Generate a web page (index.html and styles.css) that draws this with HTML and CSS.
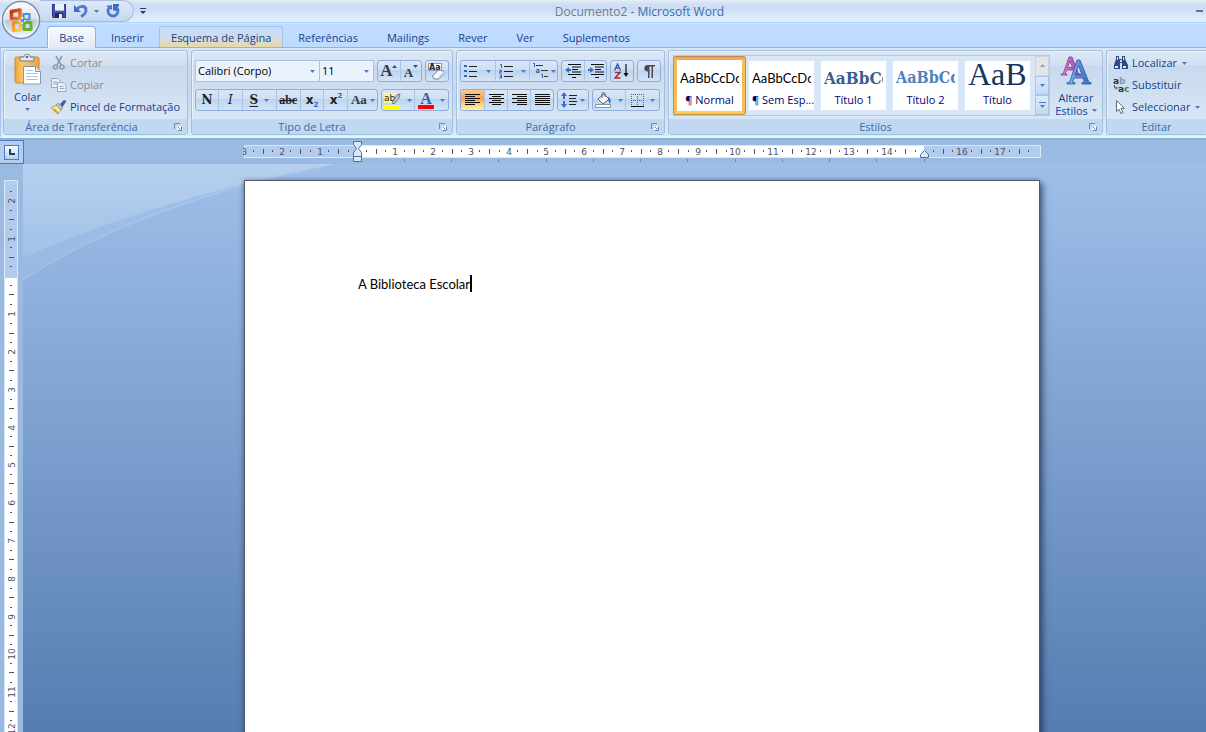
FILE: index.html
```html
<!DOCTYPE html>
<html lang="pt">
<head>
<meta charset="utf-8">
<title>Documento2 - Microsoft Word</title>
<link rel="stylesheet" href="styles.css">
</head>
<body>
<svg class="defs" width="0" height="0" aria-hidden="true">
  <defs>
    <linearGradient id="gGlass" x1="0" y1="0" x2="0" y2="1"><stop offset="0" stop-color="#fdfdfe"/><stop offset=".48" stop-color="#dde2ea"/><stop offset=".5" stop-color="#bcc6d6"/><stop offset="1" stop-color="#f6fafd"/></linearGradient>
    <linearGradient id="gRed" x1="0" y1="0" x2="1" y2="1"><stop offset="0" stop-color="#c42a10"/><stop offset="1" stop-color="#f4862c"/></linearGradient>
    <linearGradient id="gYellow" x1="0" y1="0" x2="1" y2="1"><stop offset="0" stop-color="#f08a1c"/><stop offset="1" stop-color="#ffd640"/></linearGradient>
    <linearGradient id="gBoard" x1="0" y1="0" x2="1" y2="0"><stop offset="0" stop-color="#e9a63c"/><stop offset=".3" stop-color="#fbc866"/><stop offset="1" stop-color="#e9a642"/></linearGradient>
    <linearGradient id="gPink" x1="0" y1="0" x2="1" y2="0"><stop offset="0" stop-color="#e58ad6"/><stop offset="1" stop-color="#a43aa8"/></linearGradient>
    <linearGradient id="gBlue" x1="0" y1="0" x2="1" y2="0"><stop offset="0" stop-color="#8db9f0"/><stop offset="1" stop-color="#2f68c0"/></linearGradient>
    <linearGradient id="gSky" x1="0" y1="0" x2="0" y2="1"><stop offset="0" stop-color="#c4d8f2" stop-opacity=".65"/><stop offset="1" stop-color="#b4d2f0" stop-opacity=".45"/></linearGradient>
    <symbol id="arrow" viewBox="0 0 5 3"><path d="M0 0h5L2.5 3z" fill="#4f7cb8"/></symbol>
    <symbol id="launcher" viewBox="0 0 8 8"><path d="M.5 6V.5H6" fill="none" stroke="#6b8bb5"/><path d="M3 3h5v5H3z" fill="#fff"/><path d="M3.500 3.500l3 3M7.500 3.500v4h-4" fill="none" stroke="#5f82b0"/></symbol>
    <pattern id="ticksH" x="0" y="0" width="189" height="12" patternUnits="userSpaceOnUse">
      <path fill="#4c5566" d="M9 5h1v2h-1zM19 4h1v5h-1zM28 5h1v2h-1zM47 5h1v2h-1zM57 4h1v5h-1zM66 5h1v2h-1zM85 5h1v2h-1zM95 4h1v5h-1zM104 5h1v2h-1zM122 5h1v2h-1zM132 4h1v5h-1zM142 5h1v2h-1zM160 5h1v2h-1zM170 4h1v5h-1zM180 5h1v2h-1z"/>
    </pattern>
    <pattern id="ticksV" x="0" y="0" width="12" height="189" patternUnits="userSpaceOnUse">
      <path fill="#4c5566" d="M6 9v1h2v-1zM5 18v1h5v-1zM6 28v1h2v-1zM6 47v1h2v-1zM5 57v1h5v-1zM6 66v1h2v-1zM6 85v1h2v-1zM5 94v1h5v-1zM6 104v1h2v-1zM6 123v1h2v-1zM5 132v1h5v-1zM6 142v1h2v-1zM6 160v1h2v-1zM5 170v1h5v-1zM6 179v1h2v-1z"/>
    </pattern>
    <pattern id="tabStops" x="0" y="0" width="189" height="4" patternUnits="userSpaceOnUse">
      <path fill="#7d8591" d="M0 0h1v3h-1zM47 0h1v3h-1zM94 0h1v3h-1zM141 0h1v3h-1z"/>
    </pattern>
  </defs>
</svg>

<header class="titlebar">
  <button class="office" type="button" aria-label="Botão do Office">
    <svg width="40" height="40" viewBox="0 0 40 40">
      <circle cx="20" cy="20" r="18.500" fill="url(#gGlass)" stroke="#7c8ca8" stroke-width="1.500"/>
      <circle cx="20" cy="20" r="17" fill="none" stroke="#fff" stroke-opacity=".8"/>
      <g fill="none" stroke-linejoin="round">
        <path d="M10.500 11.500l8.500-1.500v8.500h-8.500z" stroke="url(#gRed)" stroke-width="3.600"/>
        <rect x="22.500" y="14" width="6" height="5.500" stroke="#4a8fdc" stroke-width="2.200"/>
        <path d="M12.500 22.500h7v8h-7z" stroke="url(#gYellow)" stroke-width="3.200"/>
        <path d="M23 22.500h7v7h-7z" stroke="#6bb02c" stroke-width="3"/>
      </g>
      <path d="M18 20.700h6.500M21.200 17v7" stroke="#fff" stroke-width="1.400"/>
      <path d="M19.500 20.700h3.500M21.200 19v3.500" stroke="#3f7fd0" stroke-width="1.200"/>
    </svg>
  </button>
  <div class="quick">
    <button class="flat" type="button" aria-label="Guardar">
      <svg width="16" height="16" viewBox="0 0 16 16"><path d="M1 1h14v14H2l-1-1z" fill="#4a4fb5"/><path d="M1.500 1.500h13v13h-12l-1-1z" fill="none" stroke="#2c3190"/><path d="M4 1h9v7H4z" fill="#e6f2fb"/><path d="M4 7h9v1H4z" fill="#a5bfe0"/><path d="M4 10h8v5H4z" fill="#24274e"/><path d="M8 11h3v4H8z" fill="#e9eef8"/></svg>
    </button>
    <button class="flat" type="button" aria-label="Anular">
      <svg width="14" height="14" viewBox="0 0 14 14"><path d="M3 5c4-4 9-3 9 1 0 3-2 5-5 6.500" fill="none" stroke="#4a7acb" stroke-width="2.800"/><path d="M0 1v7h7z" fill="#3b6fc4"/></svg>
      <svg class="arrow" width="5" height="3"><use href="#arrow"/></svg>
    </button>
    <button class="flat" type="button" aria-label="Repetir">
      <svg width="14" height="14" viewBox="0 0 14 14"><path d="M3.500 3.500a5 5 0 1 0 7 0" fill="none" stroke="#4a7acb" stroke-width="2.800"/><path d="M7 0h6v2L10.500 4v3.500L7 6z" fill="#3b6fc4"/><path d="M0 2l6-1v5z" fill="#4a7acb"/></svg>
    </button>
  </div>
  <button class="flat customise" type="button" aria-label="Personalizar barra de acesso rápido">
    <svg width="6" height="6" viewBox="0 0 6 6"><path d="M0 0h6v1H0zM0 3h6L3 6z" fill="#243f6b"/></svg>
  </button>
  <h1 class="title"><span class="title-doc">Documento2</span> <span>- Microsoft Word</span></h1>
  <button class="flat minimise" type="button" aria-label="Minimizar">
    <svg width="7" height="2" viewBox="0 0 7 2"><path d="M0 0h7v2H0z" fill="#64748c"/></svg>
  </button>
</header>

<nav class="tabs" aria-label="Separadores">
  <button class="tab tab-active" type="button">Base</button>
  <button class="tab" type="button">Inserir</button>
  <button class="tab tab-hover" type="button">Esquema de Página</button>
  <button class="tab" type="button">Referências</button>
  <button class="tab" type="button">Mailings</button>
  <button class="tab" type="button">Rever</button>
  <button class="tab" type="button">Ver</button>
  <button class="tab" type="button">Suplementos</button>
</nav>

<div class="ribbon">
  <section class="group g-clip">
    <div class="body">
      <button class="big" type="button">
        <svg width="28" height="32" viewBox="0 0 28 32"><rect x="1" y="3" width="24" height="26" rx="1.500" fill="url(#gBoard)" stroke="#c98c34"/><path d="M6 3h4c0-4 6-4 6 0h4v4H6z" fill="#e4e8ee" stroke="#6f7b8e"/><circle cx="13" cy="3" r="1.200" fill="#5a6678"/><path d="M9.500 12.500h12l5 5v12.500h-17z" fill="#fff" stroke="#8597b4"/><path d="M21.500 12.500v5h5" fill="#dfe8f4" stroke="#8597b4"/><path d="M12 16.500h7M12 19.500h12M12 22.500h12M12 25.500h12" stroke="#b4c2d8"/></svg>
        <span>Colar</span>
        <svg class="arrow" width="5" height="3"><use href="#arrow"/></svg>
      </button>
      <div class="stack">
        <button class="line" type="button" disabled>
          <svg width="16" height="16" viewBox="0 0 16 16"><g fill="none" stroke="#8e9bb0" stroke-width="1.600"><path d="M5 1l5 9M11 1L6 10"/><circle cx="4.500" cy="12" r="2"/><circle cx="11" cy="12" r="2"/></g></svg>
          <span>Cortar</span>
        </button>
        <button class="line" type="button" disabled>
          <svg width="16" height="16" viewBox="0 0 16 16"><g fill="#eef2f8" stroke="#9aa7bb"><path d="M.5 1.500h6l3 3v6h-9z"/><path d="M6.500 5.500h5.500l3 3v6h-8.500z"/></g><path d="M2 5h4M2 7h4M8.500 9.500h4M8.500 11.500h5" stroke="#9aa7bb"/></svg>
          <span>Copiar</span>
        </button>
        <button class="line" type="button">
          <svg width="16" height="16" viewBox="0 0 16 16"><path d="M9 5l4-4 2.500 1-4 6z" fill="#5a5486"/><path d="M7 4l5 5-2 2-5-5z" fill="#b9c3d8" stroke="#60708f" stroke-width=".6"/><path d="M5 6l5 5-3 4L0 9z" fill="#fbe79a" stroke="#b38c3a" stroke-width=".8"/><path d="M3 9l5 5-1 1-4-3z" fill="#cf9c34"/></svg>
          <span>Pincel de Formatação</span>
        </button>
      </div>
    </div>
    <h2 class="caption"><span>Área de Transferência</span><button class="flat" type="button" aria-label="Opções da área de transferência"><svg width="8" height="8"><use href="#launcher"/></svg></button></h2>
  </section>

  <section class="group g-font">
    <div class="body rows">
      <div class="row">
        <div class="combos">
          <label class="combo combo-font"><select aria-label="Tipo de letra"><option>Calibri (Corpo)</option></select><svg class="arrow" width="5" height="3"><use href="#arrow"/></svg></label>
          <label class="combo combo-size"><select aria-label="Tamanho"><option>11</option></select><svg class="arrow" width="5" height="3"><use href="#arrow"/></svg></label>
        </div>
        <div class="set">
          <button class="tool tool-half" type="button" aria-label="Aumentar"><span class="glyph glyph-l">A</span><svg class="sup" width="5" height="3" viewBox="0 0 5 3"><path d="M0 3h5L2.500 0z" fill="#2a4f96"/></svg></button>
          <button class="tool tool-half" type="button" aria-label="Diminuir"><span class="glyph glyph-s">A</span><svg class="sup" width="5" height="3" viewBox="0 0 5 3"><path d="M0 0h5L2.500 3z" fill="#2a4f96"/></svg></button>
        </div>
        <div class="set">
          <button class="tool" type="button" aria-label="Limpar formatação"><svg width="18" height="18" viewBox="0 0 18 18"><path d="M.5 1.500h13v7H.5z" fill="#fff" stroke="#8c9ab0"/><text x="1" y="8" class="mini">Aa</text><path d="M4.500 14l6-6 5 1 1 3-6 5H6z" fill="#f5f8fd" stroke="#7486a8"/><path d="M10.500 16.500l1-3 5-4.500v3z" fill="#c3cfe4"/></svg></button>
        </div>
      </div>
      <div class="row">
        <div class="set">
          <button class="tool" type="button" aria-label="Negrito"><span class="glyph">N</span></button>
          <button class="tool" type="button" aria-label="Itálico"><span class="glyph glyph-i">I</span></button>
          <button class="tool tool-drop" type="button" aria-label="Sublinhado"><span class="glyph glyph-u">S</span><svg class="arrow" width="5" height="3"><use href="#arrow"/></svg></button>
          <button class="tool" type="button" aria-label="Rasurado"><span class="glyph glyph-k">abc</span></button>
          <button class="tool" type="button" aria-label="Inferior à linha"><span class="glyph glyph-x">x</span><span class="sub-n">2</span></button>
          <button class="tool" type="button" aria-label="Superior à linha"><span class="glyph glyph-x">x</span><span class="sup-n">2</span></button>
          <button class="tool tool-case" type="button" aria-label="Maiúsculas/minúsculas"><span class="glyph glyph-c">Aa</span><svg class="arrow" width="5" height="3"><use href="#arrow"/></svg></button>
        </div>
        <div class="set">
          <button class="tool tool-drop" type="button" aria-label="Cor de realce"><svg width="17" height="17" viewBox="0 0 17 17"><path d="M0 1h11v10H0z" fill="#fdf3a0"/><text x="0" y="9" class="mini mini-b">ab</text><path d="M8 11l5-8 3-1-1 4-5 6z" fill="#b9c6de" stroke="#4d5f86" stroke-width=".8"/><path d="M0 13h16v4H0z" fill="#ffff00"/></svg><svg class="arrow" width="5" height="3"><use href="#arrow"/></svg></button>
          <button class="tool tool-drop" type="button" aria-label="Cor do tipo de letra"><span class="glyph glyph-color">A</span><svg class="arrow" width="5" height="3"><use href="#arrow"/></svg></button>
        </div>
      </div>
    </div>
    <h2 class="caption"><span>Tipo de Letra</span><button class="flat" type="button" aria-label="Opções do tipo de letra"><svg width="8" height="8"><use href="#launcher"/></svg></button></h2>
  </section>

  <section class="group g-para">
    <div class="body rows">
      <div class="row">
        <div class="set">
          <button class="tool tool-list" type="button" aria-label="Marcas"><svg width="14" height="14" viewBox="0 0 14 14"><path d="M0 1h3v2H0zM0 6h3v2H0zM0 11h3v2H0z" fill="#3c62a8"/><path d="M5 2.500h8M5 7.500h8M5 12.500h8" stroke="#222"/></svg><svg class="arrow" width="5" height="3"><use href="#arrow"/></svg></button>
          <button class="tool tool-list" type="button" aria-label="Numeração"><svg width="14" height="15" viewBox="0 0 14 15"><path d="M1 .5h1.500V4M.5 6h2v1.500h-2V9H3M.5 11h2v3h-2M1 12.500h1.500" fill="none" stroke="#3c62a8"/><path d="M5 2.500h9M5 7.500h9M5 12.500h9" stroke="#222"/></svg><svg class="arrow" width="5" height="3"><use href="#arrow"/></svg></button>
          <button class="tool tool-multi" type="button" aria-label="Lista de vários níveis"><svg width="16" height="16" viewBox="0 0 16 16"><path d="M1 .5h1.500V4M4.500 6.500h2.500V9.500H4.500V8H7M9 11.500h1.500V15" fill="none" stroke="#3c62a8"/><path d="M4 2.500h7M9 7.500h7M12 13.500h4" stroke="#333"/></svg><svg class="arrow" width="5" height="3"><use href="#arrow"/></svg></button>
        </div>
        <div class="set">
          <button class="tool tool-half" type="button" aria-label="Diminuir avanço"><svg width="16" height="14" viewBox="0 0 16 14"><path d="M3 .5h13M7 3h9M7 5.500h6M7 8h9M3 10.500h13M7 13.500h4" stroke="#111" stroke-width="1.200"/><path d="M0 6l4-3v2h2v2H4v2z" fill="#3b6fc4"/></svg></button>
          <button class="tool tool-half" type="button" aria-label="Aumentar avanço"><svg width="16" height="14" viewBox="0 0 16 14"><path d="M3 .5h13M7 3h9M7 5.500h6M7 8h9M3 10.500h13M7 13.500h4" stroke="#111" stroke-width="1.200"/><path d="M6 6L2 3v2H0v2h2v2z" fill="#3b6fc4"/></svg></button>
        </div>
        <div class="set">
          <button class="tool" type="button" aria-label="Ordenar"><svg width="16" height="16" viewBox="0 0 16 16"><path d="M.5 7.500L3.500 1l3 6.500M2 5h3.500" fill="none" stroke="#3557a8" stroke-width="1.300"/><path d="M1 9.500h5L1 15h5.500" fill="none" stroke="#a02c2c" stroke-width="1.500"/><path d="M12 1v10" stroke="#111" stroke-width="1.200"/><path d="M9.500 10h5L12 14z" fill="#111"/></svg></button>
        </div>
        <div class="set">
          <button class="tool" type="button" aria-label="Mostrar tudo"><svg width="11" height="13" viewBox="0 0 11 13"><path d="M11 0H4C-1 0-1 6.500 4 6.500V13h1.500V1.500h2V13H9V1.500h2z" fill="#4a4a4e"/></svg></button>
        </div>
      </div>
      <div class="row">
        <div class="set">
          <button class="tool tool-align tool-on" type="button" aria-label="Esquerda"><svg width="15" height="12" viewBox="0 0 15 12"><path d="M0 .5h15M0 2.500h10M0 4.500h15M0 6.500h10M0 8.500h15M0 10.500h10" stroke="#111"/></svg></button>
          <button class="tool tool-align" type="button" aria-label="Centro"><svg width="15" height="12" viewBox="0 0 15 12"><path d="M0 .5h15M3 2.500h9M0 4.500h15M3 6.500h9M0 8.500h15M3 10.500h9" stroke="#111"/></svg></button>
          <button class="tool tool-align" type="button" aria-label="Direita"><svg width="15" height="12" viewBox="0 0 15 12"><path d="M0 .5h15M5 2.500h10M0 4.500h15M5 6.500h10M0 8.500h15M5 10.500h10" stroke="#111"/></svg></button>
          <button class="tool tool-align" type="button" aria-label="Justificar"><svg width="15" height="12" viewBox="0 0 15 12"><path d="M0 .5h15M0 2.500h15M0 4.500h15M0 6.500h15M0 8.500h15M0 10.500h15" stroke="#111"/></svg></button>
        </div>
        <div class="set">
          <button class="tool tool-spacing" type="button" aria-label="Espaçamento"><svg width="16" height="16" viewBox="0 0 16 16"><path d="M0 4l3-4 3 4H4v3H2V4zM0 12l3 4 3-4H4V9H2v3z" fill="#3b6fc4"/><path d="M8 3.500h8M8 6.500h7M8 9.500h8M8 12.500h7" stroke="#222"/></svg><svg class="arrow" width="5" height="3"><use href="#arrow"/></svg></button>
        </div>
        <div class="set">
          <button class="tool tool-drop" type="button" aria-label="Sombreado"><svg width="17" height="16" viewBox="0 0 17 16"><path d="M3 7l6-5 5 5-6 5z" fill="#f4f7fb" stroke="#55606f"/><path d="M7 6V2c0-2 3-2 3 0v3" fill="none" stroke="#55606f"/><path d="M13 5c3 1 3 4 2 7-1-2-2-3-2-7z" fill="#2f68c0"/><path d="M.5 12.500h15v3H.5z" fill="#fff" stroke="#8a93a0"/></svg><svg class="arrow" width="5" height="3"><use href="#arrow"/></svg></button>
          <button class="tool tool-drop" type="button" aria-label="Limites"><svg width="13" height="13" viewBox="0 0 13 13"><path d="M0 .5h13M0 6.500h13M.5 0v12M6.500 0v12M12.500 0v12" stroke="#5a6270" stroke-dasharray="1 1"/><path d="M0 12.500h13" stroke="#111"/></svg><svg class="arrow" width="5" height="3"><use href="#arrow"/></svg></button>
        </div>
      </div>
    </div>
    <h2 class="caption"><span>Parágrafo</span><button class="flat" type="button" aria-label="Opções do parágrafo"><svg width="8" height="8"><use href="#launcher"/></svg></button></h2>
  </section>

  <section class="group g-styles">
    <div class="body">
      <div class="gallery">
        <div class="thumbs">
          <button class="thumb thumb-on" type="button"><span class="sample">AaBbCcDc</span><span class="name">¶ Normal</span></button>
          <button class="thumb" type="button"><span class="sample">AaBbCcDc</span><span class="name">¶ Sem Esp...</span></button>
          <button class="thumb" type="button"><span class="sample sample-h1">AaBbCc</span><span class="name">Título 1</span></button>
          <button class="thumb" type="button"><span class="sample sample-h2">AaBbCc</span><span class="name">Título 2</span></button>
          <button class="thumb" type="button"><span class="sample sample-title">AaB</span><span class="name">Título</span></button>
        </div>
        <div class="scroller">
          <button class="scroll scroll-off" type="button" aria-label="Para cima"><svg width="5" height="3" viewBox="0 0 5 3"><path d="M0 3h5L2.500 0z" fill="#9a9ea5"/></svg></button>
          <button class="scroll" type="button" aria-label="Para baixo"><svg width="5" height="3"><use href="#arrow"/></svg></button>
          <button class="scroll" type="button" aria-label="Mais"><svg width="7" height="6" viewBox="0 0 7 6"><path d="M0 0h7v1H0zM1 3h5L3.500 6z" fill="#4f7cb8"/></svg></button>
        </div>
      </div>
      <button class="big big-styles" type="button">
        <svg width="32" height="32" viewBox="0 0 32 32"><g stroke-width=".8"><path d="M1 20h6v-1H5l1.500-4h7l1 4h-2v1h8v-1h-2L12 2H9L3 19H1zM7.500 12.500L10 6l2.500 6.500z" fill="url(#gPink)" stroke="#8a3a98" fill-rule="evenodd"/><path d="M7 29h8v-1.500h-2.500l1.500-4.500h9l1.500 4.500H22V29h9v-1.500h-2L20 5h-3L9.500 27.500H7zM15 20l3.500-9.500L22 20z" fill="url(#gBlue)" stroke="#2b5aa5" fill-rule="evenodd"/></g></svg>
        <span>Alterar</span>
        <span class="with-arrow">Estilos <svg width="5" height="3"><use href="#arrow"/></svg></span>
      </button>
    </div>
    <h2 class="caption"><span>Estilos</span><button class="flat" type="button" aria-label="Opções de estilos"><svg width="8" height="8"><use href="#launcher"/></svg></button></h2>
  </section>

  <section class="group g-edit">
    <div class="body">
      <div class="stack">
        <button class="line" type="button">
          <svg width="16" height="16" viewBox="0 0 16 16"><path d="M3 1h3v3h3V1h3v3l3 6v4H9V8H7v6H1v-4l2-6z" fill="#2b4a86"/><path d="M4 2h1v3H4zM10 2h1v3h-1zM2 11h3v2H2zM10 11h3v2h-3zM7 5h2v2H7z" fill="#d5e4f8"/></svg>
          <span>Localizar</span><svg class="arrow" width="5" height="3"><use href="#arrow"/></svg>
        </button>
        <button class="line" type="button">
          <svg width="16" height="16" viewBox="0 0 16 16"><text x="0" y="7" class="mini mini-x">a<tspan fill="#8b95a5">b</tspan></text><text x="5" y="15" class="mini mini-x">a<tspan fill="#1f9a2c">c</tspan></text><path d="M1.500 8v3h3M3 9.500L4.500 11 3 12.500" fill="none" stroke="#3b5f9c"/></svg>
          <span>Substituir</span>
        </button>
        <button class="line" type="button">
          <svg width="16" height="16" viewBox="0 0 16 16"><path d="M3.500 1.500v11l2.500-2.300 2 4.300 2-1-2-4.200h3.500z" fill="#fff" stroke="#5f6b80"/></svg>
          <span>Seleccionar</span><svg class="arrow" width="5" height="3"><use href="#arrow"/></svg>
        </button>
      </div>
    </div>
    <h2 class="caption"><span>Editar</span></h2>
  </section>
</div>

<div class="ruler-bar">
  <button class="tab-kind" type="button" aria-label="Tipo de tabulação"><span class="tab-kind-face"><svg width="6" height="6" viewBox="0 0 6 6"><path d="M0 0h2v4h4v2H0z" fill="#24405f"/></svg></span></button>
  <div class="centre">
    <svg class="ruler-h" width="798" height="22" viewBox="-114 -4 798 22">
      <path d="M-112.500 1.500h796v12h-796z" fill="#b3cbec" stroke="#dbe8f8"/>
      <path d="M0 2h567v11H0z" fill="#fff"/>
      <g transform="translate(0 1)">
        <path d="M-112 0h795v12h-795z" fill="url(#ticksH)"/>
        <g class="nums"><text x="-113" y="10">3</text><text x="-75" y="10">2</text><text x="-37" y="10">1</text><text x="38" y="10">1</text><text x="76" y="10">2</text><text x="114" y="10">3</text><text x="152" y="10">4</text><text x="189" y="10">5</text><text x="227" y="10">6</text><text x="265" y="10">7</text><text x="303" y="10">8</text><text x="341" y="10">9</text><text x="378" y="10">10</text><text x="416" y="10">11</text><text x="454" y="10">12</text><text x="492" y="10">13</text><text x="530" y="10">14</text><text x="605" y="10">16</text><text x="643" y="10">17</text></g>
      </g>
      <g transform="translate(0 15)"><path d="M2 0h567v3H2z" fill="url(#tabStops)"/></g>
      <g fill="#dfe8f5" stroke="#4a70ad"><path d="M-3.500-2.500h8v3L1.500 4.500l3 4v4h-8v-4l3-4-3-4z"/><path d="M-3.500 12.500h8v5h-8z"/><path d="M563.500 13.500v-3l4-4 4 4v3z"/></g>
    </svg>
  </div>
</div>

<main class="work">
  <div class="ruler-side">
    <svg width="14" height="568" viewBox="0 -96 14 568">
      <path d="M.5-95.500h13v98H.5z" fill="#b3cbec" stroke="#dbe8f8"/>
      <path d="M1 2h12v470H1z" fill="#fff"/><path d="M.5 2v470M13.500 2v470" stroke="#d5e2f4"/>
      <path d="M1-93h12v563H1z" fill="url(#ticksV)"/>
      <g class="nums"><text transform="translate(11 -75) rotate(-90)">2</text><text transform="translate(11 -37) rotate(-90)">1</text><text transform="translate(11 38) rotate(-90)">1</text><text transform="translate(11 76) rotate(-90)">2</text><text transform="translate(11 114) rotate(-90)">3</text><text transform="translate(11 152) rotate(-90)">4</text><text transform="translate(11 189) rotate(-90)">5</text><text transform="translate(11 227) rotate(-90)">6</text><text transform="translate(11 265) rotate(-90)">7</text><text transform="translate(11 303) rotate(-90)">8</text><text transform="translate(11 341) rotate(-90)">9</text><text transform="translate(11 378) rotate(-90)">10</text><text transform="translate(11 416) rotate(-90)">11</text><text transform="translate(11 453) rotate(-90)">12</text></g>
    </svg>
  </div>
  <div class="desk">
    <svg class="swoosh" width="320" height="120" viewBox="0 0 320 120" aria-hidden="true">
      <path d="M0 0h310Q130 36 0 94z" fill="url(#gSky)"/>
      <path d="M310 0Q130 36 0 94v22Q90 56 240 16z" fill="#aecbee" fill-opacity=".25"/>
      <path d="M0 116Q90 56 240 16L310 0" fill="none" stroke="#b9d3f2" stroke-opacity=".4" stroke-width="1.500"/>
    </svg>
    <div class="centre">
      <article class="page" contenteditable="true" role="textbox" aria-label="Documento" spellcheck="false"><p>A Biblioteca Escolar<span class="caret"></span></p></article>
    </div>
  </div>
</main>
</body>
</html>
```
FILE: styles.css
```css
* { box-sizing: border-box; }
html, body { height: 100%; }
body {
  margin: 0;
  display: flex;
  flex-direction: column;
  overflow: hidden;
  background: #bfdbff;
  color: #15428b;
  font: 11px/16px "Open Sans", "Noto Sans", sans-serif;
}
.defs { position: absolute; }
svg { display: block; flex: none; }
button, select { font: inherit; color: inherit; margin: 0; }
button { padding: 0; border: 0; background: none; }
h1, h2, p { margin: 0; font: inherit; }
.flat { display: flex; align-items: center; gap: 6px; }

/* Title bar */
.titlebar {
  position: relative;
  display: flex;
  align-items: center;
  flex: none;
  height: 23px;
  padding-left: 40px;
  background: linear-gradient(#e6edf7 0, #cfdff4 4px, #cbddf6 9px, #dfecfc 18px, #e5f0fd 22px);
  border-bottom: 1px solid #b0d4fb;
}
.office { position: absolute; left: 1px; top: 0; z-index: 2; }
.quick {
  display: flex;
  align-items: center;
  gap: 7px;
  height: 22px;
  width: 94px;
  padding-left: 11px;
  border: 1px solid #a5bfe2;
  border-left: 0;
  border-radius: 0 11px 11px 0;
  background: linear-gradient(#dfe9f6, #c5d8f0);
}
.customise { margin-left: 6px; }
.title {
  flex: 1;
  padding: 2px 63px 0 0;
  text-align: center;
  font-size: 12px;
  color: #3e6aaa;
}
.title-doc { color: #6f7c91; }
.minimise { padding-right: 3px; }

/* Tabs */
.tabs {
  display: flex;
  flex: none;
  height: 25px;
  padding: 2px 0 0 47px;
  gap: 1px;
  border-bottom: 1px solid #8db2e3;
  border-top: 1px solid #cfe4fd;
}
.tab { padding: 1px 13px 0; border: 1px solid transparent; border-bottom: 0; }
.tab-active {
  width: 49px;
  padding: 1px 0 0;
  margin-bottom: -1px;
  border-color: #8db2e3;
  border-radius: 4px 4px 0 0;
  background: linear-gradient(#f6faff, #dfeaf7);
  box-shadow: inset 1px 1px #fff;
}
.tab-hover {
  padding: 1px 11px 0;
  border-color: #a3c3ec;
  border-radius: 3px 3px 0 0;
  background: linear-gradient(#c3dcfa, #cfdcea 50%, #e6d9a8);
}

/* Ribbon */
.ribbon {
  display: flex;
  flex: none;
  gap: 3px;
  height: 90px;
  padding: 2px 0 1px 2px;
  border-left: 1px solid #a6c6ee;
  border-bottom: 2px solid #d6fbff;
  background: linear-gradient(#dbe7f5, #cbdcf0 20%, #c7d9ee 60%, #dcebfa);
}
.group {
  display: flex;
  flex-direction: column;
  border: 1px solid #a3bfdd;
  border-radius: 3px;
  background: linear-gradient(#dde8f5 0, #d2e0f1 14px, #c8d9ee 15px, #d8e7f7 68px);
  box-shadow: inset 1px 1px #e9f1fa;
}
.g-clip { width: 185px; }
.g-font { width: 262px; }
.g-para { width: 209px; }
.g-styles { width: 435px; }
.g-edit { flex: 1; border-right: 0; border-radius: 3px 0 0 3px; }
.body { flex: 1; display: flex; min-width: 0; min-height: 0; }
.caption {
  display: flex;
  align-items: center;
  flex: none;
  height: 15px;
  padding: 0 5px 0 17px;
  background: #c1d8f1;
  color: #3e6aaa;
  border-radius: 0 0 2px 2px;
}
.caption span { flex: 1; text-align: center; padding-right: 24px; }
.g-clip .caption { padding-left: 9px; }
.g-edit .caption { padding: 0; }
.g-edit .caption span { padding: 0; }

.big {
  display: flex;
  flex-direction: column;
  align-items: center;
  width: 47px;
  padding-top: 3px;
  line-height: 13px;
}
.big > svg:first-child { margin-bottom: 4px; }
.big .arrow { margin-top: 5px; }
.stack { display: flex; flex-direction: column; padding-top: 1px; }
.line { display: flex; align-items: center; height: 22px; gap: 3px; white-space: nowrap; }
.line:disabled { color: #8d8d8d; }
.line .arrow { margin-left: 2px; }
.g-edit .stack { padding-left: 6px; }

.rows { flex-direction: column; gap: 7px; padding: 9px 3px 0; }
.row { display: flex; gap: 3px; }
.combos { display: flex; }
.combo {
  display: flex;
  align-items: center;
  height: 22px;
  padding-right: 4px;
  border: 1px solid #abc1de;
  background: #eaf2fb;
}
.combo select {
  flex: 1;
  min-width: 0;
  padding: 0 2px;
  appearance: none;
  border: 0;
  outline: 0;
  background: none;
  color: #000;
}
.combo-font { width: 125px; }
.combo-size { width: 55px; margin-left: -1px; }
.set {
  display: flex;
  height: 22px;
  border: 1px solid #8eaedb;
  border-radius: 3px;
  background: linear-gradient(#dbe7f6, #cddff3 45%, #bdd3ee 46%, #d3e4f8);
  overflow: hidden;
}
.tool {
  display: flex;
  align-items: center;
  justify-content: center;
  width: 24px;
  border-left: 1px solid #abc4e6;
}
.tool:first-child { width: 22px; border-left: 0; }
.tool.tool-half { width: 22px; }
.tool.tool-drop { width: 34px; gap: 6px; }
.tool.tool-drop:first-child { width: 32px; }
.tool.tool-list { width: 34px; gap: 8px; }
.tool.tool-multi { width: 29px; gap: 3px; }
.tool.tool-case { width: 30px; gap: 3px; }
.tool.tool-align { width: 23px; }
.tool.tool-spacing { width: 30px; gap: 3px; }
.tool-on { background: linear-gradient(#fbc98c, #f7a452 45%, #fdd27c 70%, #fff0a6); }
.glyph { font: bold 12px/16px "DejaVu Serif", serif; color: #1d1d22; }
.glyph-i { font-style: italic; font-weight: normal; }
.glyph-u { text-decoration: underline; text-underline-offset: 2px; }
.glyph-k { font: bold 12px/16px "Liberation Serif", serif; text-decoration: line-through; }
.glyph-x { font: bold 12px/16px "DejaVu Sans", sans-serif; }
.glyph-l { font: bold 17px/18px "Liberation Serif", serif; color: #333b48; }
.glyph-s { font: bold 13px/18px "Liberation Serif", serif; color: #333b48; padding-top: 3px; }
.glyph-c { font: bold 13px/16px "Liberation Serif", serif; color: #333b48; }
.glyph-color { font: bold 16px/13px "Liberation Serif", serif; color: #3a60a8; width: 16px; border-bottom: 4px solid #f00; }
.sup { align-self: flex-start; margin-top: 4px; }
.sub-n, .sup-n { font: bold 7px/8px "DejaVu Sans", sans-serif; color: #3a60a8; }
.sub-n { padding-top: 9px; }
.sup-n { padding-bottom: 8px; }
.mini { font: bold 8px "DejaVu Sans", sans-serif; fill: #222; }
.mini-b { font-size: 9px; font-weight: normal; }
.mini-x { font-size: 9px; fill: #333; }

/* Style gallery */
.g-styles .body { padding: 4px 0 3px 4px; }
.gallery { display: flex; width: 377px; border: 1px solid #b3c9e6; background: #d8e7f8; }
.thumbs { display: flex; flex: 1; }
.thumb {
  display: flex;
  flex-direction: column;
  width: 72px;
  padding: 0 3px;
  border: 4px solid transparent;
  border-width: 5px 3px 5px 4px;
  background: #fff;
  background-clip: padding-box;
  color: #00006e;
  line-height: 18px;
  overflow: hidden;
}
.thumb-on {
  width: 71px;
  margin: 1px 0 1px 0;
  border: 3px solid #f3b34c;
  border-color: #f0a55a #f7bd52 #fdd04b;
  padding-top: 1px;
  border-radius: 2px;
  box-shadow: 0 0 0 1px #c08a4a;
}
.sample {
  width: 59px;
  height: 30px;
  overflow: hidden;
  text-align: left;
  font: 13px/34px Lato, sans-serif;
  color: #000;
}
.sample-h1 { font: bold 17px/34px "DejaVu Serif Condensed", "DejaVu Serif", serif; color: #365f91; }
.sample-h2 { font: bold 16px/34px "DejaVu Serif Condensed", "DejaVu Serif", serif; color: #4f81bd; }
.sample-title { font: 32px/26px "Liberation Serif", serif; color: #17365d; }
.name { text-align: center; white-space: nowrap; }
.scroller { display: grid; grid-template-rows: 1fr 1fr 1fr; width: 14px; }
.scroll {
  display: flex;
  align-items: center;
  justify-content: center;
  border: 1px solid #a9c4e8;
  background: linear-gradient(#dce9f9, #c3d9f3);
}
.scroll-off { background: #e4e5e8; border-color: #cfd3da; }
.big-styles { flex: 1; padding-top: 0; }
.with-arrow { display: flex; align-items: center; gap: 4px; }

/* Horizontal ruler */
.ruler-bar {
  display: flex;
  flex: none;
  height: 26px;
  border-top: 2px solid #94b1d3;
  background: #9bbae1;
}
.tab-kind {
  display: flex;
  align-items: center;
  justify-content: center;
  width: 24px;
  height: 24px;
  border: 1px solid #4a78cd;
  border-left: 0;
  background: #b5cdee;
}
.tab-kind-face {
  display: flex;
  align-items: center;
  justify-content: center;
  width: 15px;
  height: 15px;
  border: 1px solid #4a78cd;
  background: linear-gradient(#fff, #b5cdee);
}
.centre { flex: 1; display: flex; justify-content: center; padding-left: 55px; }
.ruler-bar .centre { padding-left: 54px; }
.nums { font: 9px "DejaVu Sans", sans-serif; fill: #4c5566; text-anchor: middle; }

/* Work area */
.work { display: flex; flex: 1; min-height: 0; background: #9bbae1; }
.ruler-side { width: 23px; padding: 16px 0 0 4px; overflow: hidden; }
.desk {
  position: relative;
  flex: 1;
  display: flex;
  padding-top: 16px;
  overflow: hidden;
  background: linear-gradient(#9fbfe9, #567db1);
}
.swoosh { position: absolute; left: 0; top: 0; }
.page {
  position: relative;
  width: 796px;
  min-height: 1123px;
  padding: 94px 113px;
  border: 1px solid #565d68;
  outline: 0;
  background: #fff;
  box-shadow: 3px 3px 6px rgba(20, 35, 60, .6), -1px 0 4px rgba(20, 35, 60, .3);
  color: #000;
  font: 13px/18px Lato, sans-serif;
}
.page p { display: flex; }
.caret { width: 2px; height: 17px; background: #000; }
```
